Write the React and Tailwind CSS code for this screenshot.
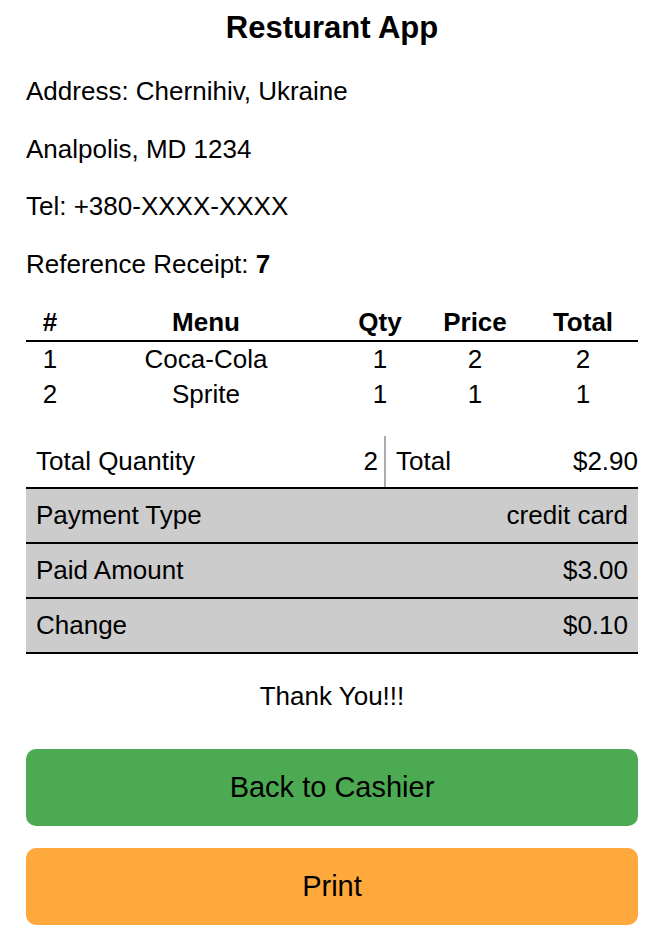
const items = [
  { id: 1, name: 'Coca-Cola', qty: 1, price: 2, total: 2 },
  { id: 2, name: 'Sprite', qty: 1, price: 1, total: 1 },
];

const cols = 'grid grid-cols-[48px_264px_84px_106px_110px] text-center';

function SummaryRow({ label, value }) {
  return (
    <div className="flex h-[55px] items-center justify-between border-b-2 border-black bg-[#cccccc] px-[10px]">
      <span>{label}</span>
      <span>{value}</span>
    </div>
  );
}

export default function App() {
  return (
    <div className="min-h-screen bg-white px-[26px] text-[26px] leading-[33.6px] text-black font-['Liberation_Sans',Arial,sans-serif]">
      <h1 className="pt-[8px] text-center text-[31px] font-bold leading-[40px]">Resturant App</h1>

      <div className="mt-[27px] flex flex-col gap-[24px]">
        <p>Address: Chernihiv, Ukraine</p>
        <p>Analpolis, MD 1234</p>
        <p>Tel: +380-XXXX-XXXX</p>
        <p>
          Reference Receipt: <b>7</b>
        </p>
      </div>

      <div className="mt-[23px]">
        <div className={`${cols} h-[38px] items-center border-b-2 border-black font-bold`}>
          <span>#</span>
          <span>Menu</span>
          <span>Qty</span>
          <span>Price</span>
          <span>Total</span>
        </div>
        {items.map((item) => (
          <div key={item.id} className={`${cols} h-[35px] items-center`}>
            <span>{item.id}</span>
            <span>{item.name}</span>
            <span>{item.qty}</span>
            <span>{item.price}</span>
            <span>{item.total}</span>
          </div>
        ))}
      </div>

      <div className="mt-[24px]">
        <div className="flex h-[53px] border-b-2 border-black">
          <div className="flex w-[360px] items-center justify-between border-r-2 border-[#aaaaaa] pl-[10px] pr-[6px]">
            <span>Total Quantity</span>
            <span>2</span>
          </div>
          <div className="flex flex-1 items-center justify-between pl-[10px]">
            <span>Total</span>
            <span>$2.90</span>
          </div>
        </div>
        <SummaryRow label="Payment Type" value="credit card" />
        <SummaryRow label="Paid Amount" value="$3.00" />
        <SummaryRow label="Change" value="$0.10" />
      </div>

      <p className="mt-[26px] text-center">Thank You!!!</p>

      <div className="mt-[35px] flex flex-col gap-[22px] pb-[12px]">
        <button className="h-[77px] rounded-[10px] bg-[#4caa52] text-[29px] text-black">
          Back to Cashier
        </button>
        <button className="h-[77px] rounded-[10px] bg-[#ffa83c] text-[29px] text-black">
          Print
        </button>
      </div>
    </div>
  );
}
